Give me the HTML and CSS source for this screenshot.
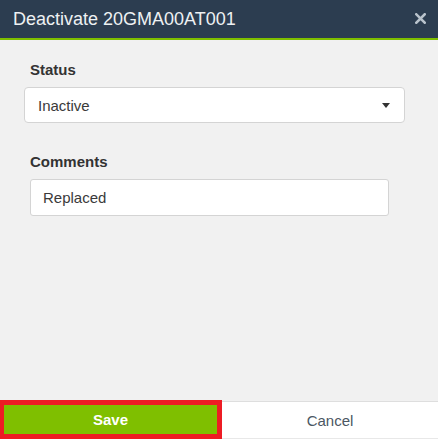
FILE: index.html
```html
<!DOCTYPE html>
<html>
<head>
<meta charset="utf-8">
<link rel="stylesheet" href="styles.css">
</head>
<body>
<div class="dialog">
  <div class="header">
    <div class="title">Deactivate 20GMA00AT001</div>
    <svg class="close" width="11" height="11" viewBox="0 0 11 11"><path d="M1.3 1.3 L9.7 9.7 M9.7 1.3 L1.3 9.7" stroke="#b9c3cc" stroke-width="2.6" stroke-linecap="square"/></svg>
  </div>
  <div class="content">
    <div class="group">
      <div class="label">Status</div>
      <div class="select">
        <span>Inactive</span>
        <svg class="caret" width="8" height="5" viewBox="0 0 8 5"><path d="M0 0 H8 L4 5 Z" fill="#333"/></svg>
      </div>
    </div>
    <div class="group comments">
      <div class="label">Comments</div>
      <div class="input">Replaced</div>
    </div>
  </div>
  <div class="footer">
    <div class="btn save">Save</div>
    <div class="btn cancel">Cancel</div>
  </div>
</div>
</body>
</html>
```
FILE: styles.css
```css
html, body {
  margin: 0;
  padding: 0;
  width: 438px;
  height: 439px;
  overflow: hidden;
  font-family: "Liberation Sans", Arial, sans-serif;
  background: #f1f1f1;
}
.dialog {
  display: flex;
  flex-direction: column;
  width: 438px;
  height: 439px;
}
.header {
  height: 38px;
  background: #2c3d50;
  border-bottom: 2px solid #7fbf00;
  display: flex;
  align-items: center;
  justify-content: space-between;
  padding: 0 12px 0 13px;
}
.title {
  color: #eef1f3;
  font-size: 18px;
  line-height: 22px;
  margin-top: -1px;
}
.close {
  display: block;
  margin-top: -2px;
}
.content {
  flex: 1;
  padding: 20px 0 0 30px;
}
.label {
  font-size: 15px;
  font-weight: bold;
  line-height: 20px;
  color: #333;
}
.select {
  margin: 7px 0 0 -6px;
  width: 381px;
  height: 36px;
  box-sizing: border-box;
  background: #fff;
  border: 1px solid #d4d4d4;
  border-radius: 4px;
  display: flex;
  align-items: center;
  justify-content: space-between;
  padding: 0 14px 0 13px;
  font-size: 15px;
  color: #3a3a3a;
}
.caret {
  display: block;
  margin-top: 1px;
}
.comments {
  margin-top: 29px;
}
.input {
  margin-top: 7px;
  width: 359px;
  height: 37px;
  box-sizing: border-box;
  background: #fff;
  border: 1px solid #d4d4d4;
  border-radius: 3px;
  display: flex;
  align-items: center;
  padding-left: 12px;
  font-size: 15px;
  color: #3a3a3a;
}
.footer {
  height: 39px;
  display: flex;
  align-items: flex-end;
}
.btn {
  display: flex;
  align-items: center;
  justify-content: center;
  font-size: 15px;
  box-sizing: border-box;
}
.save {
  width: 222px;
  height: 39px;
  background: #7fbf00;
  border: 5px solid #ed1c24;
  border-left-width: 4px;
  color: #fff;
  font-weight: bold;
}
.cancel {
  flex: 1;
  height: 38px;
  background: #fff;
  border-top: 1px solid #dedede;
  border-bottom: 1px solid #e8e8e8;
  color: #4b5763;
}
```
